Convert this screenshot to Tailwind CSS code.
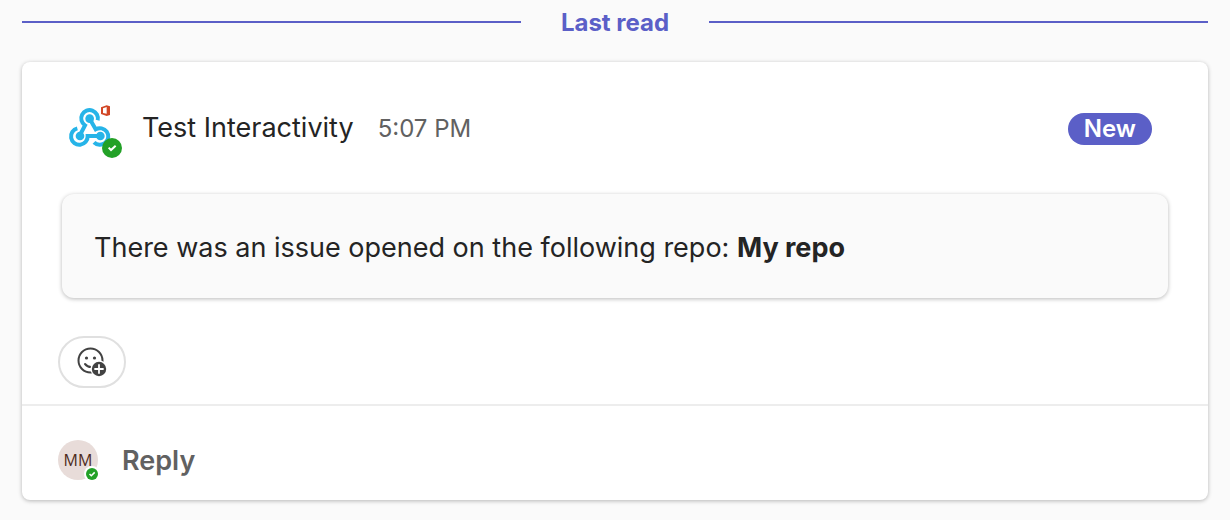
<!DOCTYPE html>
<html lang="en">
<head>
<meta charset="utf-8">
<title>Channel conversation</title>
<script src="https://cdn.jsdelivr.net/npm/@tailwindcss/browser@4"></script>
</head>
<body class="bg-[#fafafa] px-[22px] pb-5 font-[Inter,sans-serif] text-[#242424]">
<div class="flex h-11 items-center gap-10 text-[#5b5fc7]" role="separator" aria-label="Last read">
  <span class="h-[2px] flex-1 bg-[#5b5fc7]"></span>
  <span class="pt-[2px] text-2xl leading-8 font-bold">Last read</span>
  <span class="h-[2px] flex-1 bg-[#5b5fc7]"></span>
</div>
<main class="mt-[18px] rounded-lg bg-white shadow-[0_1px_4px_rgba(0,0,0,0.28)]">
  <article class="px-10 pt-[42px] pb-4">
    <header class="flex items-start pr-4 pl-[6px]">
      <svg class="size-[54px] shrink-0" viewBox="24 24 162 162" aria-hidden="true">
        <g fill="none" stroke="#26b4e8" stroke-width="12">
          <path d="M113 73A25 25 0 1 0 75 88L60 117"/>
          <path d="M89 68L107 100A25 25 0 1 1 102 139"/>
          <path d="M52 97A25 25 0 1 0 83 120H121"/>
        </g>
        <g fill="#26b4e8"><circle cx="89" cy="68" r="13"/><circle cx="60" cy="120" r="13"/><circle cx="121" cy="120" r="13"/></g>
        <path fill="#d24726" fill-rule="evenodd" d="M123 34L140 28L150 31V57L140 60L123 54ZM129 37V51L140 53V33Z"/>
        <circle cx="156" cy="156" r="30" fill="#23a127"/>
        <path d="M146 155L153 162L167 149" fill="none" stroke="#fff" stroke-width="6"/>
      </svg>
      <h1 class="mt-[6px] ml-5 text-[27px] leading-9">Test Interactivity</h1>
      <time class="mt-[7px] ml-6 text-2xl leading-9 text-[#616161]">5:07 PM</time>
      <span class="mt-[9px] ml-auto rounded-full bg-[#5b5fc7] px-4 text-2xl leading-8 font-semibold text-white">New</span>
    </header>
    <p class="mt-9 rounded-xl bg-[#fafafa] px-8 pt-9 pb-8 text-[27px] leading-9 shadow-[0_1px_4px_rgba(0,0,0,0.28)]">There was an issue opened on the following repo: <strong class="font-bold">My repo</strong></p>
    <button type="button" aria-label="Add a reaction" class="mt-[38px] -ml-1 flex h-[52px] w-[68px] items-center justify-center rounded-full border-2 border-[#e0e0e0]">
      <svg class="size-[30px]" viewBox="0 0 30 30" aria-hidden="true">
        <circle cx="13.500" cy="13.500" r="12" fill="none" stroke="#424242" stroke-width="2"/>
        <circle cx="9.500" cy="11" r="1.600" fill="#424242"/><circle cx="17.500" cy="11" r="1.600" fill="#424242"/>
        <path d="M8 17Q10.500 20 14 20" fill="none" stroke="#424242" stroke-width="2" stroke-linecap="round"/>
        <circle cx="22" cy="22" r="8.500" fill="#fff"/><circle cx="22" cy="22" r="7.200" fill="#424242"/>
        <path d="M22 18V26M18 22H26" stroke="#fff" stroke-width="1.800" stroke-linecap="round"/>
      </svg>
    </button>
  </article>
  <footer class="flex items-center border-t-2 border-[#ededed] px-9 pt-[34px] pb-5">
    <span class="relative flex size-10 items-center justify-center rounded-full bg-[#e8dcd9] font-['Open_Sans',sans-serif] text-base font-medium text-[#4e2b20]">MM
      <svg class="absolute -right-[2px] -bottom-[2px] size-4" viewBox="0 0 16 16" aria-hidden="true"><circle cx="8" cy="8" r="8" fill="#fff"/><circle cx="8" cy="8" r="6" fill="#23a127"/><path d="M5.500 8L7.300 9.800L10.700 6.400" fill="none" stroke="#fff" stroke-width="1.500"/></svg>
    </span>
    <button type="button" class="ml-6 pt-[2px] text-[27px] leading-9 font-semibold text-[#616161]">Reply</button>
  </footer>
</main>
</body>
</html>
